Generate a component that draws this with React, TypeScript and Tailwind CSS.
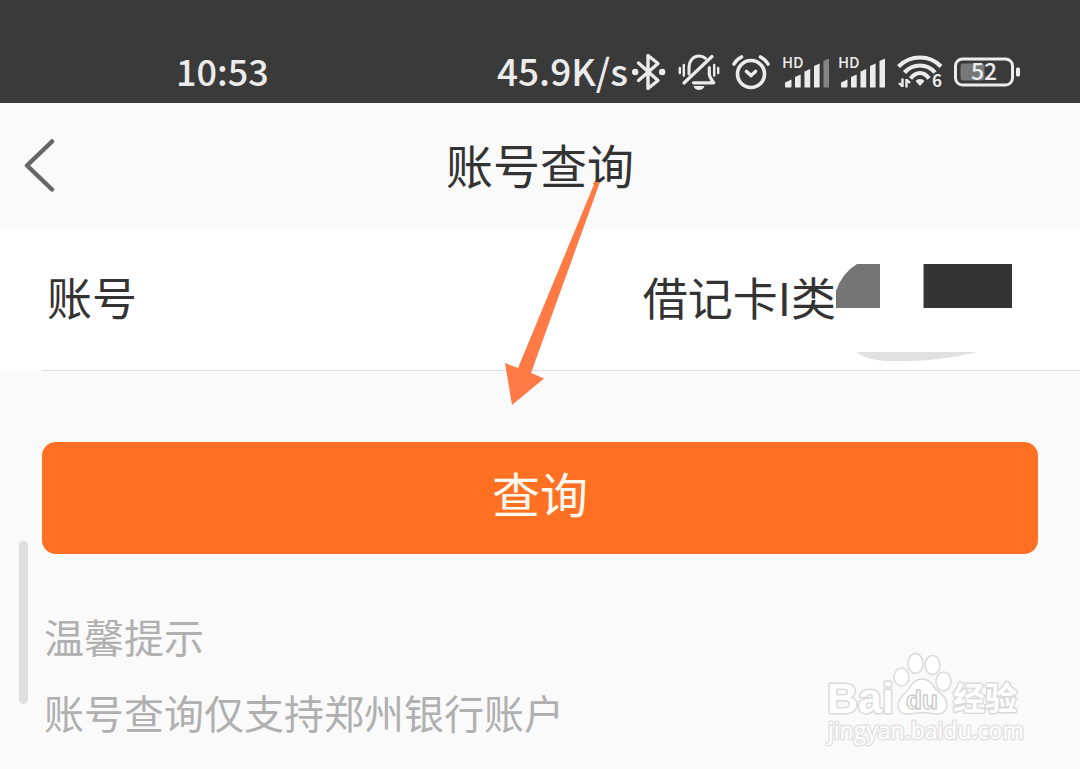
import type { ReactNode } from 'react';

const Bluetooth = () => (
  <svg width="34" height="38" viewBox="0 0 34 38" fill="none" stroke="#ececec" strokeWidth="3.400" strokeLinecap="round" strokeLinejoin="round">
    <path d="M6.500 10 26 27.500 16 35.500V2.500L26 10.500 6.500 27.500" />
    <circle cx="3.200" cy="19" r="3.200" fill="#ececec" stroke="none" />
    <circle cx="30.200" cy="19" r="3.200" fill="#ececec" stroke="none" />
  </svg>
);

const BellOff = () => (
  <svg width="42" height="36" viewBox="0 0 42 36" fill="none" stroke="#ececec" strokeLinecap="round" strokeLinejoin="round">
    <path strokeWidth="3.200" d="M6 29 34 2.500" />
    <path strokeWidth="3" d="M11 20V14.500C11 7 15 2 21 2c2.800 0 5 .9 6.500 2.300" />
    <path strokeWidth="3.200" d="M31.300 13.500V20c0 3 2 5.500 4.500 8.800H15.500" />
    <path fill="#ececec" stroke="none" d="M15.500 32h11c-.8 2.500-2.900 4-5.500 4s-4.700-1.500-5.500-4z" />
    <path strokeWidth="2.400" d="M1.800 14v5M5.800 11v10.500M36.200 11v10.500M40.200 14v5" />
  </svg>
);

const Alarm = () => (
  <svg width="38" height="36" viewBox="0 -1 38 36" fill="none" stroke="#ececec" strokeWidth="3.600" strokeLinecap="round" strokeLinejoin="round">
    <circle cx="19" cy="19" r="13.500" />
    <path d="M2 9Q4.500 4.500 9.500 2M28.500 2Q33.500 4.500 36 9" />
    <path d="M14.500 16.500 19 20.500 23.500 16.500" />
  </svg>
);

const Signal = ({ lastBar }: { lastBar: string }) => (
  <svg className="overflow-visible" width="48" height="31" viewBox="0 0 48 31" fill="#ececec">
    <text x="0" y="11" fontSize="15" fontWeight="500">
      HD
    </text>
    <path d="M3 25.500 9.500 22.500V29.500Q9.500 30.500 8.500 30.500H4Q3 30.500 3 29.500z" />
    <path d="M13 20 18.700 17.500V30.500H13z" />
    <path d="M22.500 14.500 28.200 12V30.500H22.500z" />
    <path d="M32 9 37.600 6.500V30.500H32z" />
    <path d="M41.500 4 47 1.500V30.500H41.500z" fill={lastBar} />
  </svg>
);

const Wifi = () => (
  <svg className="overflow-visible" width="44" height="34" viewBox="0 0 44 34" fill="none" stroke="#ececec" strokeWidth="4.200">
    <path d="M.5 11.500Q9.500 2.500 22 2.500T43 11.500" />
    <path d="M6.500 17.500Q13 10.500 22 10.500T37 17.500" />
    <path d="M12.500 23.500Q17 18 22 18T31 23.500" />
    <path d="M22 24c2 0 3.500.8 4.500 2L22 31l-4.500-5c1-1.200 2.500-2 4.500-2z" fill="#ececec" stroke="none" />
    <path d="M4.500 23.500v8.500M4.500 31.500 1 28M8.500 32.500V24M8.500 24.500l3.500 3.500" strokeWidth="2.400" />
    <text x="34" y="32" fontSize="17" fontWeight="700" fill="#ececec" stroke="none">
      6
    </text>
  </svg>
);

const Battery = () => (
  <svg className="overflow-visible" width="66" height="30" viewBox="0 0 66 30" fill="none">
    <rect x="1.500" y="2" width="57" height="26" rx="7" stroke="#ececec" strokeWidth="3" />
    <rect x="6.500" y="6.500" width="24" height="17" rx="3" fill="#777777" />
    <rect x="62" y="10.500" width="4" height="9" rx="1.500" fill="#ececec" />
    <text x="30" y="23" fontSize="23" fontWeight="500" fill="#ececec" textAnchor="middle">
      52
    </text>
  </svg>
);

const StatusBar = () => (
  <div className="flex items-center justify-between bg-[#3a3a3a] pt-11 pb-[3px] pl-44 pr-[60px] text-[#ececec]">
    <span className="pb-1 text-[36px] leading-[52px] font-medium">10:53</span>
    <div className="flex items-center gap-3">
      <div className="flex items-center gap-1">
        <span className="pb-1 text-[37px] leading-[52px] font-medium">45.9K/s</span>
        <Bluetooth />
      </div>
      <BellOff />
      <Alarm />
      <div className="flex gap-2">
        <Signal lastBar="#858585" />
        <Signal lastBar="#ececec" />
      </div>
      <Wifi />
      <Battery />
    </div>
  </div>
);

const Header = ({ title }: { title: string }) => (
  <header className="grid grid-cols-[1fr_auto_1fr] items-center px-6 py-7">
    <button type="button" aria-label="返回" className="justify-self-start">
      <svg width="32" height="54" viewBox="0 0 32 54" fill="none" stroke="#666666" strokeWidth="4.500" strokeLinecap="round" strokeLinejoin="round">
        <path d="M28 2.500 3 26.500 28 50.500" />
      </svg>
    </button>
    <h1 className="pb-1 text-[47px] leading-[66px]">{title}</h1>
  </header>
);

const Row = ({ label, children }: { label: string; children: ReactNode }) => (
  <div className="bg-white">
    <div className="flex items-center justify-between pt-2 pb-[9px] pl-[47px] pr-[67px] text-[45px] leading-[64px]">
      <span className="pb-1">{label}</span>
      <div className="flex items-center">{children}</div>
    </div>
    <div className="ml-[42px] h-px bg-[#dcdcdc]" />
  </div>
);

// Covers the digits of the card number
const CardMask = () => (
  <svg width="177" height="124" viewBox="0 0 177 124">
    <path d="M0 71V54Q6 36 21 27H44V71z" fill="#757575" />
    <path d="M87.500 27H176V71H87.500z" fill="#343434" />
    <path d="M20 115H141Q104 124 70 124H49Q31 123 20 115z" fill="#e1e1e1" />
  </svg>
);

const Arrow = () => (
  <svg className="pointer-events-none absolute top-[182px] left-1/2 -ml-9" width="96" height="224" viewBox="0 0 96 224">
    <path d="M91 0H96L27 191 40 196.500 8 223 1 181 14 186z" fill="#ff7a45" />
  </svg>
);

const Watermark = () => (
  <svg
    className="pointer-events-none absolute right-14 bottom-5 overflow-visible"
    width="198"
    height="97"
    viewBox="0 0 198 97"
    fill="#ffffff"
    stroke="#dadada"
    strokeWidth="1.500"
    strokeLinejoin="round"
  >
    <g fontWeight="700">
      <text x="1" y="61" fontSize="43" fontFamily="Liberation Sans" strokeWidth="3" paintOrder="stroke">
        Bai
      </text>
      <ellipse cx="75.500" cy="25" rx="7.500" ry="9" />
      <ellipse cx="89.500" cy="11.500" rx="7.500" ry="10" />
      <ellipse cx="106.500" cy="13" rx="7.500" ry="9.500" />
      <ellipse cx="117.500" cy="29.500" rx="7.500" ry="9.500" />
      <path d="M96 27c5 0 9 3 12 8 4 6 13 9 13 18 0 6-4 9-10 9-5 0-9-1.500-14-1.500S86 62 81 62c-6 0-9-4-9-9 0-8 8-11 12-18 3-5 7-8 12-8z" />
      <text x="80" y="57" fontSize="26" fontFamily="Liberation Sans" stroke="#cccccc">
        du
      </text>
      <text x="127" y="58" fontSize="32" strokeWidth="3" paintOrder="stroke">
        经验
      </text>
    </g>
    <text x="2" y="87" fontSize="23" fontFamily="Open Sans" strokeWidth="3" stroke="#e2e2e2" paintOrder="stroke">
      jingyan.baidu.com
    </text>
  </svg>
);

export default function App() {
  return (
    <div className="relative min-h-screen bg-[#fafafa] font-['Noto_Sans_CJK_SC',sans-serif] text-[#333333]">
      <StatusBar />
      <Header title="账号查询" />
      <main>
        <Row label="账号">
          <span className="pb-1">借记卡I类</span>
          <CardMask />
        </Row>
        <div className="px-[42px] pt-[71px]">
          <button type="button" className="block w-full rounded-[14px] bg-[#ff7022] pt-4 pb-7 text-[48px] leading-[68px] text-[#fffaf0]">
            查询
          </button>
        </div>
        <div className="px-11 pt-11 text-[40px] leading-[76px] text-[#b0b0b0]">
          <h2>温馨提示</h2>
          <p>账号查询仅支持郑州银行账户</p>
        </div>
      </main>
      <div className="absolute top-[541px] left-[19px] h-[163px] w-[9px] rounded-full bg-[#dedede]" />
      <Arrow />
      <Watermark />
    </div>
  );
}
